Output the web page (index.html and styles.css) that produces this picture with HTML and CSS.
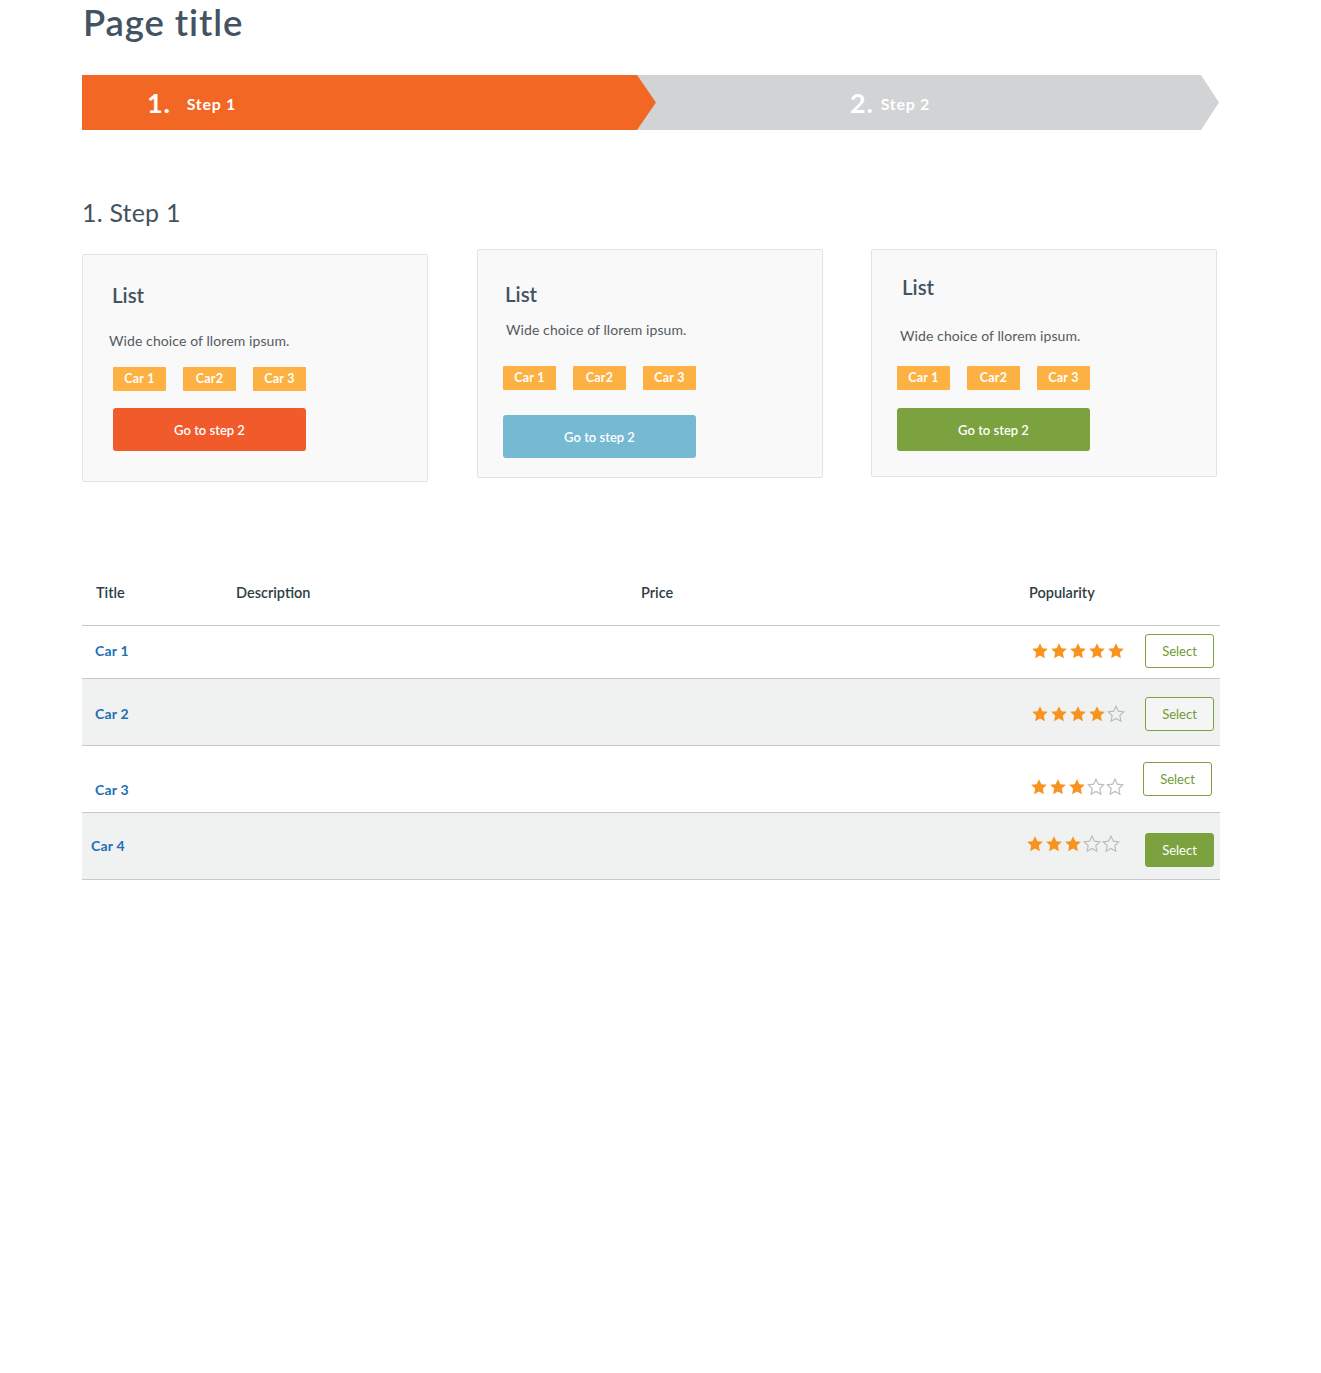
FILE: index.html
```html
<!DOCTYPE html>
<html lang="en">
<head>
<meta charset="utf-8">
<title>Page title</title>
<link rel="stylesheet" href="styles.css">
</head>
<body>
<div class="page">
  <h1 class="page-title">Page title</h1>

  <nav class="stepper">
    <div class="step step--active"><span class="step-num">1.</span><span class="step-label">Step 1</span></div>
    <div class="step step--next"><span class="step-num">2.</span><span class="step-label">Step 2</span></div>
  </nav>

  <h2 class="section-title">1. Step 1</h2>

  <div class="cards">
    <div class="card card--one">
      <h3 class="card-title">List</h3>
      <p class="card-text">Wide choice of llorem ipsum.</p>
      <div class="tags"><span class="tag">Car 1</span><span class="tag">Car2</span><span class="tag">Car 3</span></div>
      <button class="btn btn--orange">Go to step 2</button>
    </div>
    <div class="card card--two">
      <h3 class="card-title">List</h3>
      <p class="card-text">Wide choice of llorem ipsum.</p>
      <div class="tags"><span class="tag">Car 1</span><span class="tag">Car2</span><span class="tag">Car 3</span></div>
      <button class="btn btn--blue">Go to step 2</button>
    </div>
    <div class="card card--three">
      <h3 class="card-title">List</h3>
      <p class="card-text">Wide choice of llorem ipsum.</p>
      <div class="tags"><span class="tag">Car 1</span><span class="tag">Car2</span><span class="tag">Car 3</span></div>
      <button class="btn btn--green">Go to step 2</button>
    </div>
  </div>

  <div class="table">
    <div class="trow thead">
      <div class="cell">Title</div>
      <div class="cell">Description</div>
      <div class="cell">Price</div>
      <div class="cell">Popularity</div>
    </div>
    <div class="trow row--short">
      <div class="cell"><a class="car-link" href="#">Car 1</a></div>
      <div class="cell"></div>
      <div class="cell"></div>
      <div class="cell pop">
        <span class="stars">
          <svg class="star star--on" viewBox="0 0 24 24"><polygon points="12,1.5 15.2,8.2 22.5,9.1 17.1,14.1 18.5,21.5 12,17.9 5.5,21.5 6.9,14.1 1.5,9.1 8.8,8.2"/></svg>
          <svg class="star star--on" viewBox="0 0 24 24"><polygon points="12,1.5 15.2,8.2 22.5,9.1 17.1,14.1 18.5,21.5 12,17.9 5.5,21.5 6.9,14.1 1.5,9.1 8.8,8.2"/></svg>
          <svg class="star star--on" viewBox="0 0 24 24"><polygon points="12,1.5 15.2,8.2 22.5,9.1 17.1,14.1 18.5,21.5 12,17.9 5.5,21.5 6.9,14.1 1.5,9.1 8.8,8.2"/></svg>
          <svg class="star star--on" viewBox="0 0 24 24"><polygon points="12,1.5 15.2,8.2 22.5,9.1 17.1,14.1 18.5,21.5 12,17.9 5.5,21.5 6.9,14.1 1.5,9.1 8.8,8.2"/></svg>
          <svg class="star star--on" viewBox="0 0 24 24"><polygon points="12,1.5 15.2,8.2 22.5,9.1 17.1,14.1 18.5,21.5 12,17.9 5.5,21.5 6.9,14.1 1.5,9.1 8.8,8.2"/></svg>
        </span>
        <button class="select">Select</button>
      </div>
    </div>
    <div class="trow row--alt row--second">
      <div class="cell"><a class="car-link" href="#">Car 2</a></div>
      <div class="cell"></div>
      <div class="cell"></div>
      <div class="cell pop">
        <span class="stars">
          <svg class="star star--on" viewBox="0 0 24 24"><polygon points="12,1.5 15.2,8.2 22.5,9.1 17.1,14.1 18.5,21.5 12,17.9 5.5,21.5 6.9,14.1 1.5,9.1 8.8,8.2"/></svg>
          <svg class="star star--on" viewBox="0 0 24 24"><polygon points="12,1.5 15.2,8.2 22.5,9.1 17.1,14.1 18.5,21.5 12,17.9 5.5,21.5 6.9,14.1 1.5,9.1 8.8,8.2"/></svg>
          <svg class="star star--on" viewBox="0 0 24 24"><polygon points="12,1.5 15.2,8.2 22.5,9.1 17.1,14.1 18.5,21.5 12,17.9 5.5,21.5 6.9,14.1 1.5,9.1 8.8,8.2"/></svg>
          <svg class="star star--on" viewBox="0 0 24 24"><polygon points="12,1.5 15.2,8.2 22.5,9.1 17.1,14.1 18.5,21.5 12,17.9 5.5,21.5 6.9,14.1 1.5,9.1 8.8,8.2"/></svg>
          <svg class="star star--off" viewBox="0 0 24 24"><polygon points="12,1.5 15.2,8.2 22.5,9.1 17.1,14.1 18.5,21.5 12,17.9 5.5,21.5 6.9,14.1 1.5,9.1 8.8,8.2"/></svg>
        </span>
        <button class="select">Select</button>
      </div>
    </div>
    <div class="trow row--low">
      <div class="cell"><a class="car-link" href="#">Car 3</a></div>
      <div class="cell"></div>
      <div class="cell"></div>
      <div class="cell pop">
        <span class="stars">
          <svg class="star star--on" viewBox="0 0 24 24"><polygon points="12,1.5 15.2,8.2 22.5,9.1 17.1,14.1 18.5,21.5 12,17.9 5.5,21.5 6.9,14.1 1.5,9.1 8.8,8.2"/></svg>
          <svg class="star star--on" viewBox="0 0 24 24"><polygon points="12,1.5 15.2,8.2 22.5,9.1 17.1,14.1 18.5,21.5 12,17.9 5.5,21.5 6.9,14.1 1.5,9.1 8.8,8.2"/></svg>
          <svg class="star star--on" viewBox="0 0 24 24"><polygon points="12,1.5 15.2,8.2 22.5,9.1 17.1,14.1 18.5,21.5 12,17.9 5.5,21.5 6.9,14.1 1.5,9.1 8.8,8.2"/></svg>
          <svg class="star star--off" viewBox="0 0 24 24"><polygon points="12,1.5 15.2,8.2 22.5,9.1 17.1,14.1 18.5,21.5 12,17.9 5.5,21.5 6.9,14.1 1.5,9.1 8.8,8.2"/></svg>
          <svg class="star star--off" viewBox="0 0 24 24"><polygon points="12,1.5 15.2,8.2 22.5,9.1 17.1,14.1 18.5,21.5 12,17.9 5.5,21.5 6.9,14.1 1.5,9.1 8.8,8.2"/></svg>
        </span>
        <button class="select">Select</button>
      </div>
    </div>
    <div class="trow row--alt row--last">
      <div class="cell"><a class="car-link" href="#">Car 4</a></div>
      <div class="cell"></div>
      <div class="cell"></div>
      <div class="cell pop">
        <span class="stars">
          <svg class="star star--on" viewBox="0 0 24 24"><polygon points="12,1.5 15.2,8.2 22.5,9.1 17.1,14.1 18.5,21.5 12,17.9 5.5,21.5 6.9,14.1 1.5,9.1 8.8,8.2"/></svg>
          <svg class="star star--on" viewBox="0 0 24 24"><polygon points="12,1.5 15.2,8.2 22.5,9.1 17.1,14.1 18.5,21.5 12,17.9 5.5,21.5 6.9,14.1 1.5,9.1 8.8,8.2"/></svg>
          <svg class="star star--on" viewBox="0 0 24 24"><polygon points="12,1.5 15.2,8.2 22.5,9.1 17.1,14.1 18.5,21.5 12,17.9 5.5,21.5 6.9,14.1 1.5,9.1 8.8,8.2"/></svg>
          <svg class="star star--off" viewBox="0 0 24 24"><polygon points="12,1.5 15.2,8.2 22.5,9.1 17.1,14.1 18.5,21.5 12,17.9 5.5,21.5 6.9,14.1 1.5,9.1 8.8,8.2"/></svg>
          <svg class="star star--off" viewBox="0 0 24 24"><polygon points="12,1.5 15.2,8.2 22.5,9.1 17.1,14.1 18.5,21.5 12,17.9 5.5,21.5 6.9,14.1 1.5,9.1 8.8,8.2"/></svg>
        </span>
        <button class="select select--filled">Select</button>
      </div>
    </div>
  </div>
</div>
</body>
</html>
```

FILE: styles.css
```css
* { box-sizing: border-box; }

html, body {
  margin: 0;
  padding: 0;
  background: #ffffff;
}

body {
  font-family: "Lato", "Open Sans", sans-serif;
  color: #425563;
}

.page {
  width: 1138px;
  margin-left: 82px;
}

.page-title {
  margin: 0;
  padding-left: 1px;
  font-size: 36.5px;
  line-height: 44px;
  font-weight: 600;
  color: #435361;
  letter-spacing: 0.9px;
}

/* Stepper */
.stepper {
  display: flex;
  margin-top: 31px;
  height: 55px;
  width: 1137px;
}

.step {
  height: 55px;
  display: flex;
  align-items: center;
  color: #ffffff;
  font-weight: 700;
}

.step--active {
  position: relative;
  z-index: 2;
  width: 574px;
  background: #f26724;
  padding-left: 65px;
  clip-path: polygon(0 0, calc(100% - 19px) 0, 100% 50%, calc(100% - 19px) 100%, 0 100%);
}

.step--next {
  width: 582px;
  margin-left: -19px;
  background: #d1d3d4;
  padding-left: 213px;
  clip-path: polygon(0 0, calc(100% - 18px) 0, 100% 50%, calc(100% - 18px) 100%, 0 100%);
}

.step-num {
  font-size: 27px;
  line-height: 30px;
  margin-right: 16px;
  letter-spacing: 0.8px;
}

.step--next .step-num {
  margin-right: 7px;
}

.step-label {
  font-size: 16px;
  line-height: 30px;
  padding-top: 3px;
  letter-spacing: 0.7px;
}

.section-title {
  margin: 66px 0 0 0;
  font-size: 25px;
  line-height: 32px;
  font-weight: 400;
  color: #435361;
  letter-spacing: 0.2px;
}

/* Cards */
.cards {
  display: flex;
  align-items: flex-start;
  gap: 49px;
  margin-top: 21px;
}

.card {
  width: 346px;
  background: #f9f9f9;
  border: 1px solid #e3e3e3;
  border-radius: 2px;
  padding: 0 0 0 26px;
}

.card--one { margin-top: 5px; height: 228px; padding-top: 28px; }
.card--two { height: 229px; padding-top: 32px; padding-left: 24px; }
.card--three { height: 228px; padding-top: 25px; padding-left: 27px; margin-left: -1px; }

.card-title {
  margin: 0 0 0 3px;
  font-size: 20.5px;
  line-height: 24px;
  font-weight: 600;
  color: #435361;
}

.card-text {
  margin: 0;
  font-size: 14px;
  line-height: 18px;
  color: #555b61;
  letter-spacing: 0.1px;
}

.card--one .card-text { margin-top: 25px; }
.card--two .card-text { margin-top: 15px; margin-left: 4px; }
.card--three .card-text { margin-top: 28px; margin-left: 1px; }

.tags {
  display: flex;
  gap: 17px;
  margin-left: 5px;
}

.card--one .tags { margin-top: 17px; margin-left: 4px; }
.card--two .tags { margin-top: 27px; margin-left: 1px; }
.card--three .tags { margin-top: 21px; margin-left: -2px; }

.tag {
  width: 53px;
  height: 24px;
  background: #fcb142;
  color: #ffffff;
  font-size: 12.5px;
  font-weight: 700;
  line-height: 24px;
  text-align: center;
  border-radius: 1px;
  letter-spacing: 0.2px;
}

.btn {
  display: block;
  width: 193px;
  height: 43px;
  border: 0;
  border-radius: 3px;
  color: #ffffff;
  font-family: inherit;
  font-size: 13px;
  font-weight: 600;
  cursor: pointer;
}

.card--one .btn { margin-top: 17px; margin-left: 4px; }
.card--two .btn { margin-top: 25px; margin-left: 1px; }
.card--three .btn { margin-top: 18px; margin-left: -2px; }

.btn--orange { background: #f15a2b; }
.btn--blue { background: #76b9d3; }
.btn--green { background: #7ba23f; }

/* Table */
.table {
  margin-top: 96px;
  width: 1138px;
}

.trow {
  display: grid;
  grid-template-columns: 140px 405px 388px 205px;
  border-bottom: 1px solid #c6c8c8;
  align-items: center;
}

.thead {
  height: 48px;
  align-items: start;
  font-size: 14.5px;
  font-weight: 600;
  color: #2e3d48;
}

.thead .cell {
  padding-left: 14px;
  padding-top: 5px;
  line-height: 20px;
}

.row--short { height: 53px; padding-bottom: 2px; }
.row--alt { height: 67px; background: #f0f2f2; }
.row--second { padding-top: 4px; }
.row--low { height: 67px; }

.cell {
  padding-left: 13px;
}

.car-link {
  position: relative;
  top: -2px;
  color: #1f6fb5;
  text-decoration: none;
  font-size: 14px;
  font-weight: 700;
  letter-spacing: 0.2px;
}

.row--low .car-link { top: 9px; }
.row--last .cell:first-child { padding-left: 9px; }

.pop {
  display: flex;
  align-items: center;
  padding-left: 16px;
}

.stars {
  display: flex;
  gap: 1px;
  width: 114px;
}

.row--low .stars { position: relative; top: 8px; left: -1px; }
.row--last .stars { position: relative; top: -2px; left: -5px; }

.star {
  width: 18px;
  height: 18px;
}

.star--on polygon { fill: #f7931e; }
.star--off polygon { fill: none; stroke: #b9b9b9; stroke-width: 1.5; }

.select {
  width: 69px;
  height: 34px;
  border: 1px solid #7ba23f;
  border-radius: 3px;
  background: #ffffff;
  color: #6f9a34;
  font-family: inherit;
  font-size: 13px;
  font-weight: 400;
  cursor: pointer;
}

.row--alt .select { background: #f4f5f4; }
.row--low .select { position: relative; left: -2px; }
.row--last .select { position: relative; top: 4px; }

.select--filled,
.row--alt .select--filled {
  background: #7ba23f;
  color: #ffffff;
}
```
